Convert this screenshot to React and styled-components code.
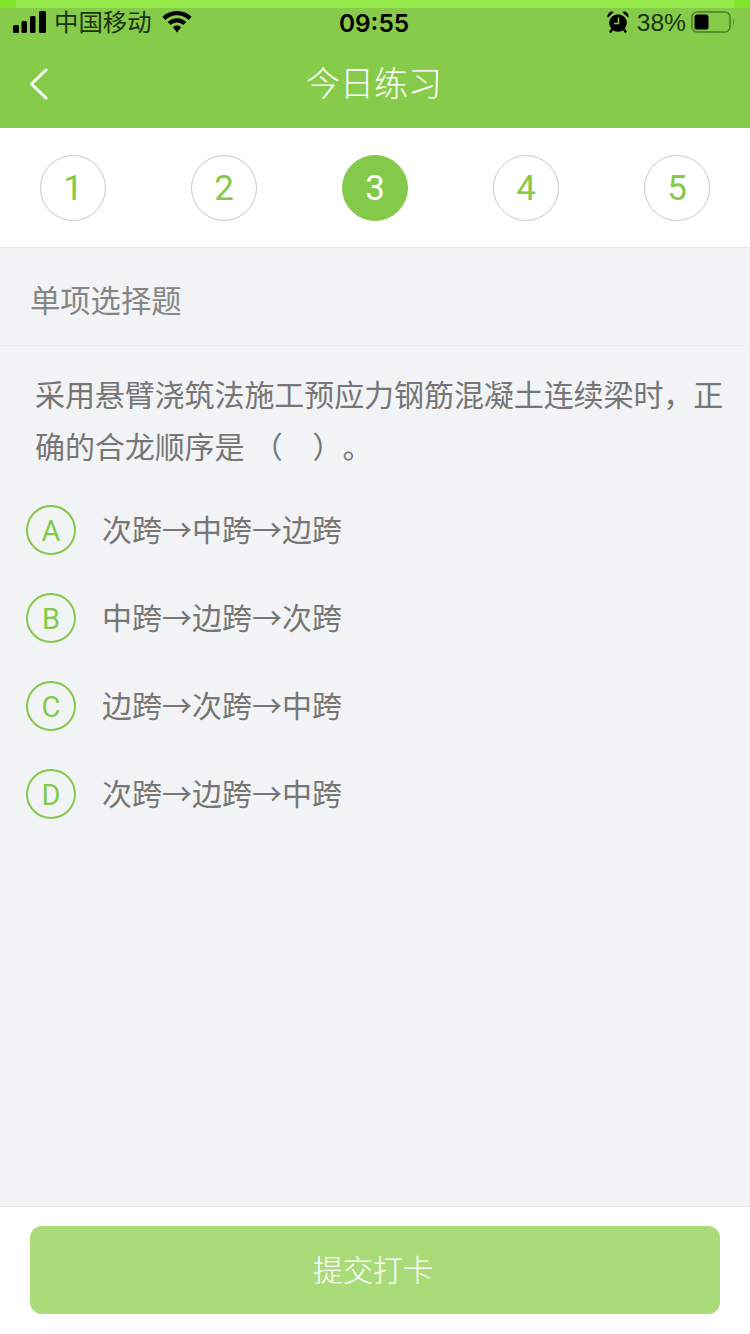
import React from "react";
import styled, { createGlobalStyle } from "styled-components";

const FONT = `"Liberation Sans", "Noto Sans CJK SC", sans-serif`;
const CJK = `"Noto Sans CJK SC", sans-serif`;
const DIGIT = `Roboto, "Liberation Sans", sans-serif`;

const GlobalStyle = createGlobalStyle`
  html, body {
    margin: 0;
    padding: 0;
    background: #f2f3f5;
  }
  * {
    box-sizing: border-box;
  }
`;

const Page = styled.div`
  width: 750px;
  height: 1334px;
  display: flex;
  flex-direction: column;
  font-family: ${FONT};
  background: #f2f3f5;
  overflow: hidden;
`;

const Header = styled.header`
  height: 128px;
  flex-shrink: 0;
  background: #87cb4b;
  display: flex;
  flex-direction: column;
`;

const TopStrip = styled.div`
  height: 8px;
  display: flex;
  justify-content: space-between;
  background: #96ea4b;
`;

const StripEnd = styled.div`
  width: 16px;
  background: #80e62c;
`;

const StatusBar = styled.div`
  height: 26px;
  padding: 0 15px 0 13px;
  display: grid;
  grid-template-columns: 1fr auto 1fr;
  align-items: center;
  color: #1c3310;
`;

const StatusLeft = styled.div`
  display: flex;
  align-items: center;
`;

const Carrier = styled.span`
  font-size: 24.4px;
  line-height: 26px;
  margin: 2px 10px 0 7px;
`;

const Time = styled.span`
  font-family: Inter, "Liberation Sans", sans-serif;
  font-size: 24.4px;
  line-height: 26px;
  font-weight: 600;
  margin-top: 2px;
  color: #000;
`;

const StatusRight = styled.div`
  display: flex;
  align-items: center;
  justify-content: flex-end;
`;

const Percent = styled.span`
  font-size: 24.6px;
  line-height: 26px;
  margin: 2px 5px 0 8px;
`;

const Nav = styled.nav`
  flex: 1;
  position: relative;
  display: flex;
  align-items: center;
  justify-content: center;
  padding-right: 2px;
`;

const BackIcon = styled.svg`
  position: absolute;
  left: 28px;
  top: 34px;
`;

const Title = styled.h1`
  margin: 0;
  font-size: 34px;
  font-weight: 300;
  color: #fff;
`;

const Stepper = styled.div`
  height: 120px;
  flex-shrink: 0;
  padding: 27px 40px 0;
  display: flex;
  justify-content: space-between;
  align-items: flex-start;
  background: #fff;
  border-bottom: 1px solid #e6e7e9;
`;

const Step = styled.div`
  width: 66px;
  height: 66px;
  border-radius: 50%;
  display: flex;
  align-items: center;
  justify-content: center;
  font-family: ${DIGIT};
  font-size: 35px;
  color: ${(p) => (p.$active ? "#fff" : "#85c94a")};
  background: ${(p) => (p.$active ? "#85c94a" : "#fff")};
  border: 1px solid ${(p) => (p.$active ? "#85c94a" : "#c9c9c9")};
`;

const SectionTitle = styled.div`
  height: 98px;
  flex-shrink: 0;
  padding: 4px 30px 0;
  display: flex;
  align-items: center;
  font-size: 30.3px;
  color: #858585;
  border-bottom: 1px solid #ebecee;
`;

const Content = styled.main`
  flex: 1;
`;

const Question = styled.p`
  margin: 0;
  padding: 24px 20px 0 35px;
  font-size: 30px;
  line-height: 52px;
  letter-spacing: -0.08px;
  text-spacing-trim: space-all;
  color: #767676;
`;

const OptionList = styled.div`
  padding: 31px 0 0 26px;
  display: flex;
  flex-direction: column;
  gap: 38px;
`;

const Option = styled.div`
  display: flex;
  align-items: center;
  height: 50px;
  gap: 26px;
`;

const OptionBadge = styled.div`
  width: 50px;
  height: 50px;
  padding-top: 2px;
  border-radius: 50%;
  border: 2px solid #85c94a;
  color: #85c94a;
  font-family: ${DIGIT};
  font-size: 29px;
  display: flex;
  align-items: center;
  justify-content: center;
`;

const OptionText = styled.span`
  padding-bottom: 4px;
  font-family: ${CJK};
  font-size: 30px;
  color: #767676;
`;

const Footer = styled.footer`
  height: 128px;
  flex-shrink: 0;
  padding: 19px 30px 0;
  background: #fff;
  border-top: 1px solid #e6e7e9;
`;

const SubmitButton = styled.button`
  width: 690px;
  height: 88px;
  padding: 0 4px 4px 0;
  border: none;
  border-radius: 12px;
  background: #a9dc78;
  color: #fff;
  font-family: ${FONT};
  font-size: 30px;
  font-weight: 300;
`;

const steps = [1, 2, 3, 4, 5];

const options = [
  { key: "A", text: "次跨→中跨→边跨" },
  { key: "B", text: "中跨→边跨→次跨" },
  { key: "C", text: "边跨→次跨→中跨" },
  { key: "D", text: "次跨→边跨→中跨" },
];

const SignalIcon = () => (
  <svg width="34" height="22" viewBox="0 0 34 22" fill="#000">
    <rect x="0" y="14" width="6" height="8" rx="1.5" />
    <rect x="8.5" y="10" width="5.5" height="12" rx="1.5" />
    <rect x="17" y="5" width="5.5" height="17" rx="1.5" />
    <rect x="26" y="0" width="7" height="22" rx="1.5" />
  </svg>
);

const WifiIcon = () => (
  <svg width="30" height="22" viewBox="0 0 30 22" fill="#000">
    <path d="M15 0C9.300 0 4.200 2.200.4 5.800L3.400 8.900C6.400 6 10.500 4.300 15 4.300S23.600 6 26.600 8.900L29.600 5.800C25.800 2.200 20.700 0 15 0Z" />
    <path d="M15 7.300C11.400 7.300 8.200 8.700 5.700 11L8.700 14C10.400 12.500 12.600 11.500 15 11.500S19.600 12.500 21.300 14L24.300 11C21.800 8.700 18.600 7.300 15 7.300Z" />
    <path d="M15 14.600C13.500 14.600 12.100 15.200 11 16.200L15 21.500L19 16.200C17.900 15.200 16.500 14.600 15 14.600Z" />
  </svg>
);

const AlarmIcon = () => (
  <svg width="22" height="22" viewBox="0 0 22 22">
    <circle cx="11" cy="12" r="8.800" fill="#000" />
    <path d="M.8 6.800A4.500 4.500 0 0 1 6.800 1ZM21.200 6.800A4.500 4.500 0 0 0 15.200 1Z" fill="#000" />
    <path d="M5 18.500L3 21.500M17 18.500L19 21.500" stroke="#000" strokeWidth="2.400" />
    <path d="M11.500 6.500V12.500H7" stroke="#87cb4b" strokeWidth="1.500" fill="none" />
  </svg>
);

const BatteryIcon = () => (
  <svg width="44" height="22" viewBox="0 0 44 22">
    <rect x="1" y="1" width="38" height="20" rx="5" fill="none" stroke="#4d7f25" strokeWidth="1.500" />
    <rect x="3.500" y="3.500" width="14" height="15" rx="2.500" fill="#000" />
    <path d="M42 7.500C43.200 8.500 43.200 13.500 42 14.500Z" fill="#4d7f25" />
  </svg>
);

const App = () => {
  return (
    <Page>
      <GlobalStyle />
      <Header>
        <TopStrip>
          <StripEnd />
          <StripEnd />
        </TopStrip>
        <StatusBar>
          <StatusLeft>
            <SignalIcon />
            <Carrier>中国移动</Carrier>
            <WifiIcon />
          </StatusLeft>
          <Time>09:55</Time>
          <StatusRight>
            <AlarmIcon />
            <Percent>38%</Percent>
            <BatteryIcon />
          </StatusRight>
        </StatusBar>
        <Nav>
          <BackIcon width="22" height="32" viewBox="0 0 22 32" fill="none">
            <path d="M18 2L3.500 16L18 30" stroke="#fff" strokeWidth="3" strokeLinecap="round" strokeLinejoin="round" />
          </BackIcon>
          <Title>今日练习</Title>
        </Nav>
      </Header>
      <Stepper>
        {steps.map((n) => (
          <Step key={n} $active={n === 3}>
            {n}
          </Step>
        ))}
      </Stepper>
      <SectionTitle>单项选择题</SectionTitle>
      <Content>
        <Question>采用悬臂浇筑法施工预应力钢筋混凝土连续梁时，正确的合龙顺序是 （　）。</Question>
        <OptionList>
          {options.map((o) => (
            <Option key={o.key}>
              <OptionBadge>{o.key}</OptionBadge>
              <OptionText>{o.text}</OptionText>
            </Option>
          ))}
        </OptionList>
      </Content>
      <Footer>
        <SubmitButton>提交打卡</SubmitButton>
      </Footer>
    </Page>
  );
};

export default App;
